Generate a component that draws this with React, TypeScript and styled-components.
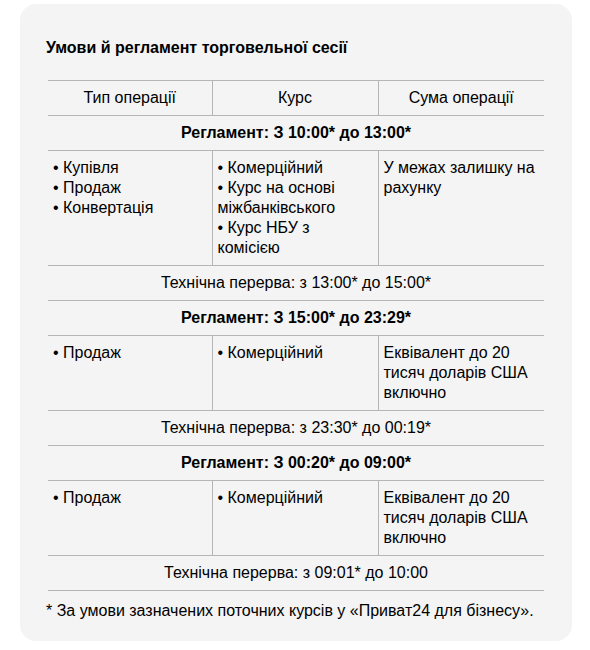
import React from "react";
import styled, { createGlobalStyle } from "styled-components";

const GlobalStyle = createGlobalStyle`
  html, body {
    margin: 0;
    padding: 0;
    background: #ffffff;
  }
  body {
    font-family: "Liberation Sans", Arial, sans-serif;
    color: #000;
  }
`;

const Page = styled.div`
  padding: 4px 18px 9px 20px;
`;

const Card = styled.section`
  width: 552px;
  box-sizing: border-box;
  background: #f4f4f4;
  border-radius: 16px;
  padding: 34px 26px 20px 26px;
`;

const Title = styled.h3`
  margin: 0 0 22px 0;
  font-size: 16px;
  line-height: 20px;
  font-weight: 700;
  color: #000;
`;

const Table = styled.table`
  width: 496px;
  margin: 0 2px;
  border-collapse: collapse;
  table-layout: fixed;
  font-size: 16px;
  line-height: 20px;
`;

const Col = styled.col<{ $w: number }>`
  width: ${(p) => p.$w}px;
`;

const Row = styled.tr`
  border-top: 1px solid #b5b5b5;
  border-bottom: 1px solid #b5b5b5;
`;

const HeadCell = styled.th`
  padding: 7px 5px;
  font-weight: 400;
  text-align: center;
  vertical-align: top;
  & + & {
    border-left: 1px solid #b5b5b5;
  }
`;

const Cell = styled.td`
  padding: 7px 5px;
  text-align: left;
  vertical-align: top;
  & + & {
    border-left: 1px solid #b5b5b5;
  }
`;

const BandCell = styled.td<{ $bold?: boolean }>`
  padding: 7px 5px;
  text-align: center;
  font-weight: ${(p) => (p.$bold ? 700 : 400)};
`;

const Line = styled.div``;

const Footnote = styled.p`
  margin: 10px 0 0 0;
  font-size: 16px;
  line-height: 20px;
`;

type Block = {
  title: string;
  ops: string[];
  rates: string[];
  amount: string;
  pause: string;
};

const blocks: Block[] = [
  {
    title: "Регламент: З 10:00* до 13:00*",
    ops: ["Купівля", "Продаж", "Конвертація"],
    rates: ["Комерційний", "Курс на основі міжбанківського", "Курс НБУ з комісією"],
    amount: "У межах залишку на рахунку",
    pause: "Технічна перерва: з 13:00* до 15:00*",
  },
  {
    title: "Регламент: З 15:00* до 23:29*",
    ops: ["Продаж"],
    rates: ["Комерційний"],
    amount: "Еквівалент до 20 тисяч доларів США включно",
    pause: "Технічна перерва: з 23:30* до 00:19*",
  },
  {
    title: "Регламент: З 00:20* до 09:00*",
    ops: ["Продаж"],
    rates: ["Комерційний"],
    amount: "Еквівалент до 20 тисяч доларів США включно",
    pause: "Технічна перерва: з 09:01* до 10:00",
  },
];

export default function App() {
  return (
    <>
      <GlobalStyle />
      <Page>
        <Card>
          <Title>Умови й регламент торговельної сесії</Title>
          <Table>
            <colgroup>
              <Col $w={164} />
              <Col $w={166} />
              <Col $w={166} />
            </colgroup>
            <thead>
              <Row>
                <HeadCell>Тип операції</HeadCell>
                <HeadCell>Курс</HeadCell>
                <HeadCell>Сума операції</HeadCell>
              </Row>
            </thead>
            <tbody>
              {blocks.map((b) => (
                <React.Fragment key={b.title}>
                  <Row>
                    <BandCell colSpan={3} $bold>
                      {b.title}
                    </BandCell>
                  </Row>
                  <Row>
                    <Cell>
                      {b.ops.map((o) => (
                        <Line key={o}>• {o}</Line>
                      ))}
                    </Cell>
                    <Cell>
                      {b.rates.map((r) => (
                        <Line key={r}>• {r}</Line>
                      ))}
                    </Cell>
                    <Cell>{b.amount}</Cell>
                  </Row>
                  <Row>
                    <BandCell colSpan={3}>{b.pause}</BandCell>
                  </Row>
                </React.Fragment>
              ))}
            </tbody>
          </Table>
          <Footnote>* За умови зазначених поточних курсів у «Приват24 для бізнесу».</Footnote>
        </Card>
      </Page>
    </>
  );
}
